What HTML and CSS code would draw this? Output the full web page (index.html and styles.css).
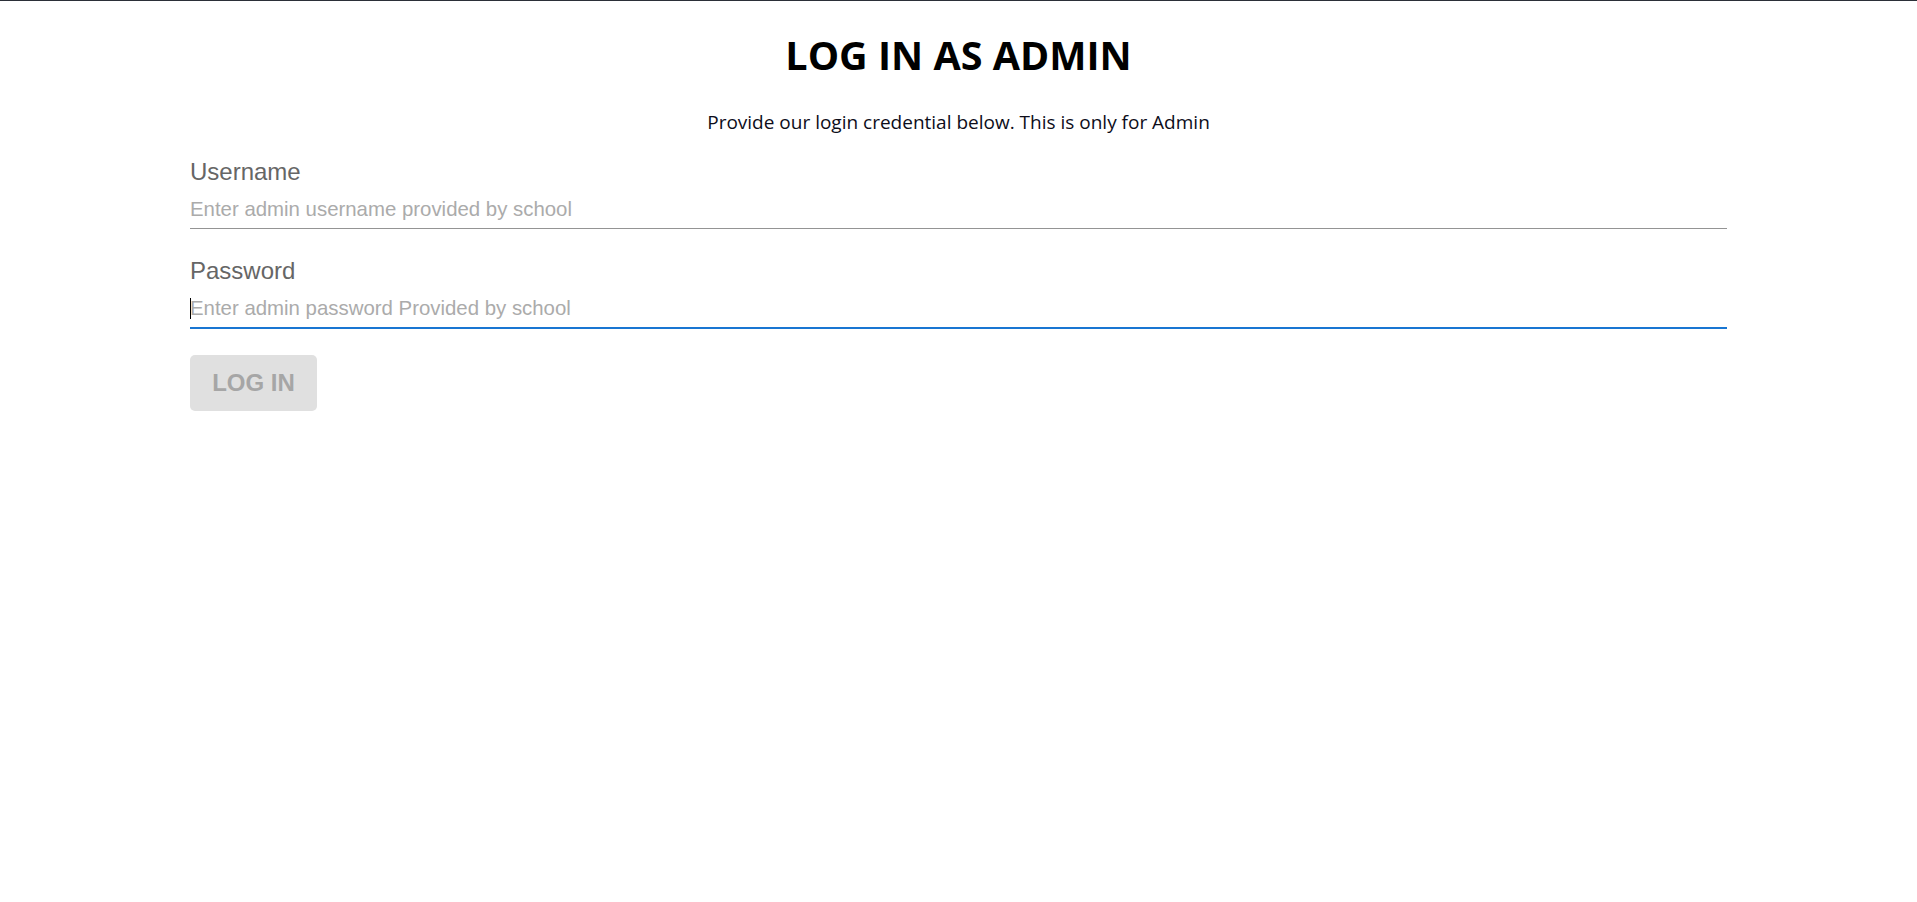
FILE: index.html
```html
<!DOCTYPE html>
<html lang="en">
<head>
<meta charset="utf-8">
<title>Log in as Admin</title>
<link rel="stylesheet" href="styles.css">
</head>
<body>
<div class="topline"></div>
<main class="page">
  <h1 class="title">LOG IN AS ADMIN</h1>
  <p class="subtitle">Provide our login credential below. This is only for Admin</p>
  <form class="form">
    <div class="field">
      <label class="label" for="username">Username</label>
      <div class="control">
        <input class="input" id="username" type="text" placeholder="Enter admin username provided by school">
      </div>
    </div>
    <div class="field">
      <label class="label" for="password">Password</label>
      <div class="control focused">
        <input class="input" id="password" type="password" placeholder="Enter admin password Provided by school">
      </div>
    </div>
    <button class="btn" type="button" disabled>LOG IN</button>
  </form>
</main>
</body>
</html>
```

FILE: styles.css
```css
html, body {
  margin: 0;
  padding: 0;
  background: #ffffff;
}

.topline {
  height: 1px;
  background: #2b2f38;
}

.page {
  width: 1537px;
  margin: 0 auto;
  display: flex;
  flex-direction: column;
}

.title {
  margin: 30px 0 0;
  text-align: center;
  font-family: "Open Sans", "Noto Sans", sans-serif;
  font-weight: 700;
  font-size: 39.5px;
  line-height: 48px;
  color: #000;
}

.subtitle {
  margin: 31px 0 0;
  text-align: center;
  font-family: "Open Sans", "Noto Sans", sans-serif;
  font-size: 19px;
  line-height: 24px;
  color: #0d0d1a;
}

.form {
  display: flex;
  flex-direction: column;
  align-items: flex-start;
  margin-top: 24px;
}

.field {
  width: 100%;
  display: flex;
  flex-direction: column;
  margin-bottom: 28px;
}

.label {
  font-family: "Liberation Sans", Arial, sans-serif;
  font-size: 24px;
  line-height: 28px;
  color: #666666;
}

.control {
  position: relative;
  margin-top: 11px;
  border-bottom: 1px solid #949494;
}

.control.focused {
  border-bottom: 2px solid #1976d2;
  margin-bottom: -1px;
}

.control.focused::before {
  content: "";
  position: absolute;
  left: 0;
  top: 2px;
  width: 1px;
  height: 21px;
  background: #000;
}

.input {
  display: block;
  width: 100%;
  box-sizing: border-box;
  border: 0;
  outline: none;
  padding: 0 0 7px;
  margin: 0;
  background: transparent;
  font-family: "Liberation Sans", Arial, sans-serif;
  font-size: 20.4px;
  line-height: 24px;
  height: 31px;
  color: #222;
}

.input::placeholder {
  color: #ababab;
  opacity: 1;
}

.btn {
  margin-top: -1px;
  width: 127px;
  height: 56px;
  border: 0;
  border-radius: 5px;
  background: #e0e0e0;
  color: #a6a6a6;
  font-family: "Liberation Sans", Arial, sans-serif;
  font-weight: 700;
  font-size: 24px;
  padding: 0;
}
```
